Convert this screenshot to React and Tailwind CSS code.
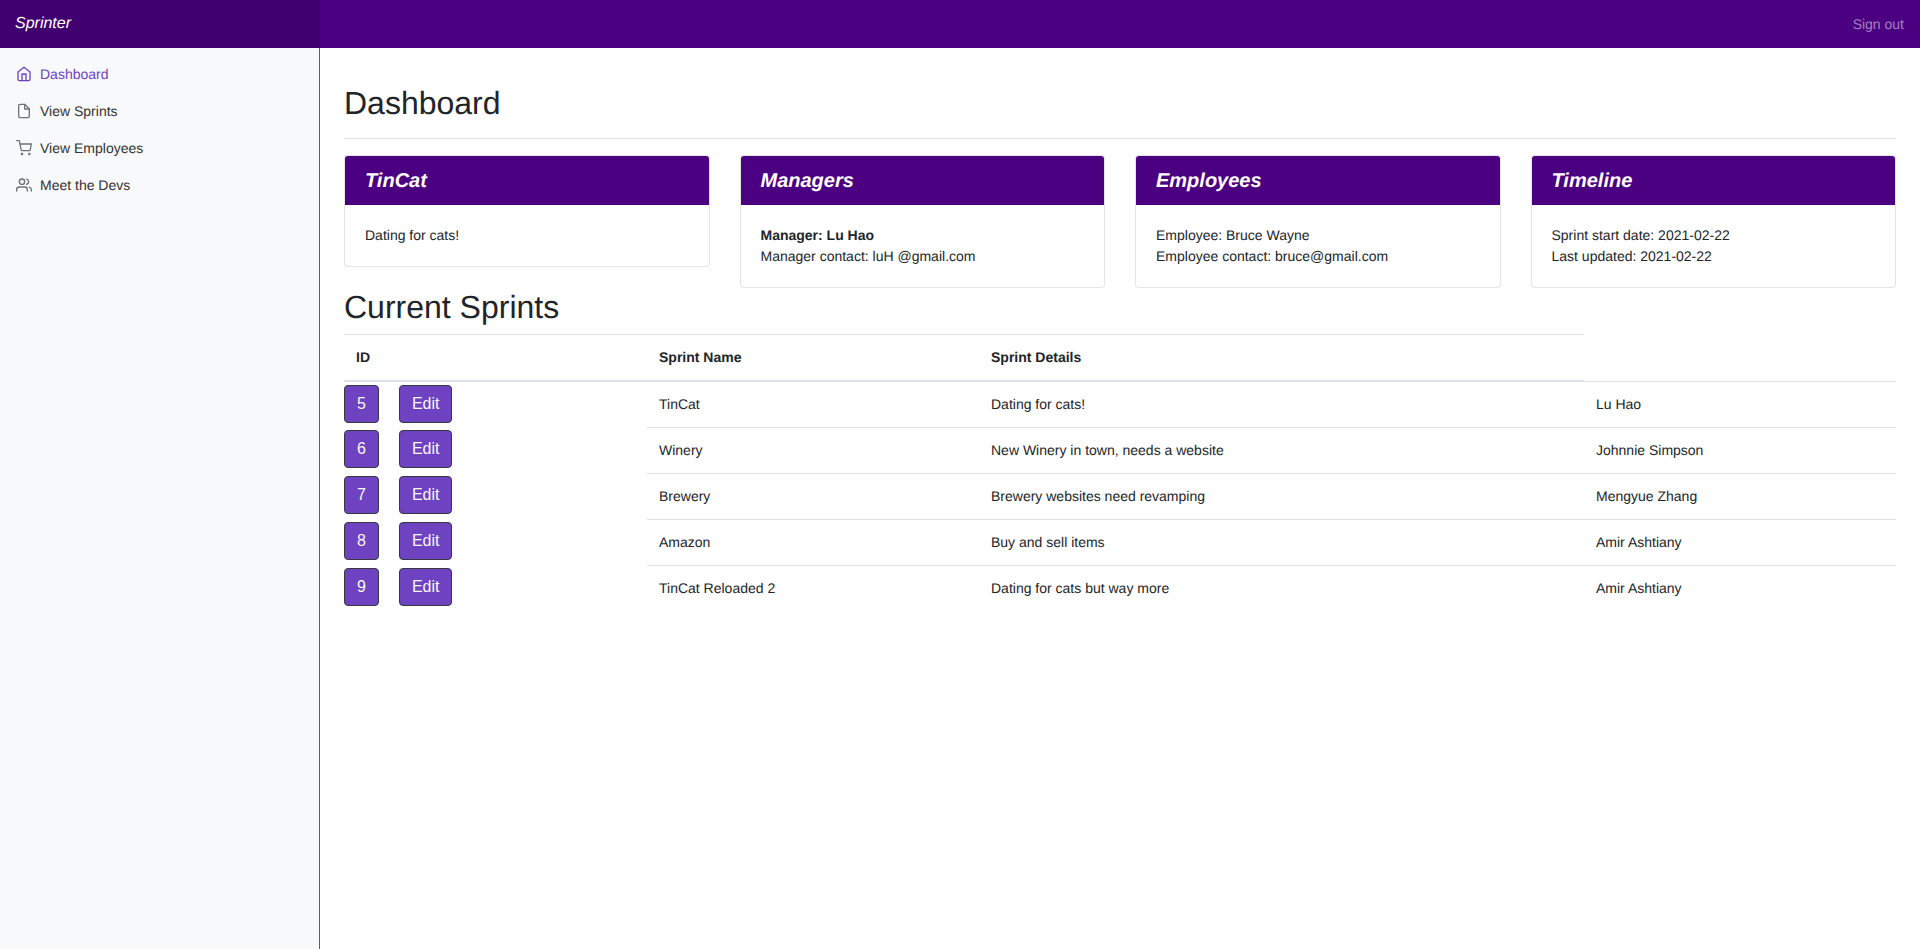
import React from "react";
import { FiHome, FiFile, FiShoppingCart, FiUsers } from "react-icons/fi";

const nav = [
  { label: "Dashboard", Icon: FiHome, active: true },
  { label: "View Sprints", Icon: FiFile },
  { label: "View Employees", Icon: FiShoppingCart },
  { label: "Meet the Devs", Icon: FiUsers },
];

const cards = [
  { title: "TinCat", lines: ["Dating for cats!"] },
  { title: "Managers", lines: ["Manager: Lu Hao", "Manager contact: luH @gmail.com"], bold: true },
  { title: "Employees", lines: ["Employee: Bruce Wayne", "Employee contact: bruce@gmail.com"] },
  { title: "Timeline", lines: ["Sprint start date: 2021-02-22", "Last updated: 2021-02-22"] },
];

const rows = [
  [5, "TinCat", "Dating for cats!", "Lu Hao"],
  [6, "Winery", "New Winery in town, needs a website", "Johnnie Simpson"],
  [7, "Brewery", "Brewery websites need revamping", "Mengyue Zhang"],
  [8, "Amazon", "Buy and sell items", "Amir Ashtiany"],
  [9, "TinCat Reloaded 2", "Dating for cats but way more", "Amir Ashtiany"],
];

const btn =
  "h-[38px] px-3 bg-[#6f42c1] border border-[#343a40] rounded text-base text-[#f8f9fa] leading-6";

export default function App() {
  return (
    <div className="h-[949px] flex flex-col bg-white text-sm leading-[21px] text-[#212529] font-['Liberation_Sans',Arial,sans-serif] [text-rendering:geometricPrecision] antialiased overflow-hidden">
      <header className="h-12 shrink-0 flex items-center bg-[#4b0082]">
        <div className="w-80 h-full flex items-center px-[15px] bg-[#410070] text-white italic text-base">
          Sprinter
        </div>
        <a className="ml-auto pr-4 text-white/50">Sign out</a>
      </header>
      <div className="flex flex-1 min-h-0">
        <aside className="w-80 shrink-0 bg-[#f8f9fa] border-r border-[#6f42c1] pt-2">
          <ul>
            {nav.map(({ label, Icon, active }) => (
              <li
                key={label}
                className={`flex items-center gap-2 px-4 py-2 ${active ? "text-[#6f42c1]" : "text-[#333333]"}`}
              >
                <Icon className={`w-4 h-4 -mt-px ${active ? "" : "text-[#727272]"}`} />
                {label}
              </li>
            ))}
          </ul>
        </aside>
        <main className="flex-1 min-w-0 px-6">
          <div className="pt-[36px] pb-4 border-b border-[#dee2e6] mb-4">
            <h1 className="text-[32px] leading-[38px] font-normal">Dashboard</h1>
          </div>
          <div className="flex items-start gap-[30px]">
            {cards.map((c) => (
              <div key={c.title} className="flex-1 min-w-0 border border-black/10 rounded overflow-hidden bg-white">
                <div className="h-[49px] flex items-center px-5 bg-[#4b0082] text-white font-bold italic text-xl">
                  {c.title}
                </div>
                <div className="p-5">
                  {c.lines.map((l, i) => (
                    <p key={l} className={c.bold && i === 0 ? "font-bold" : ""}>{l}</p>
                  ))}
                </div>
              </div>
            ))}
          </div>
          <h2 className="text-[32px] leading-[38px] font-normal mb-2">Current Sprints</h2>
          <table className="w-full table-fixed border-collapse">
            <colgroup>
              <col className="w-[303px]" />
              <col className="w-[332px]" />
              <col className="w-[605px]" />
              <col />
            </colgroup>
            <thead>
              <tr>
                {["ID", "Sprint Name", "Sprint Details"].map((h) => (
                  <th key={h} className="p-3 text-left font-bold border-t border-b-2 border-[#dee2e6]">{h}</th>
                ))}
                <th />
              </tr>
            </thead>
            <tbody>
              {rows.map(([id, name, details, owner], i) => (
                <tr key={id}>
                  <td className={`p-0 align-top ${i === 0 ? "pt-[3px]" : "pt-[2px]"}`}>
                    <div className="flex gap-5">
                      <button className={btn}>{id}</button>
                      <button className={btn}>Edit</button>
                    </div>
                  </td>
                  <td className="p-3 border-t border-[#dee2e6] align-top">{name}</td>
                  <td className="p-3 border-t border-[#dee2e6] align-top">{details}</td>
                  <td className="p-3 border-t border-[#dee2e6] align-top">{owner}</td>
                </tr>
              ))}
            </tbody>
          </table>
        </main>
      </div>
    </div>
  );
}
